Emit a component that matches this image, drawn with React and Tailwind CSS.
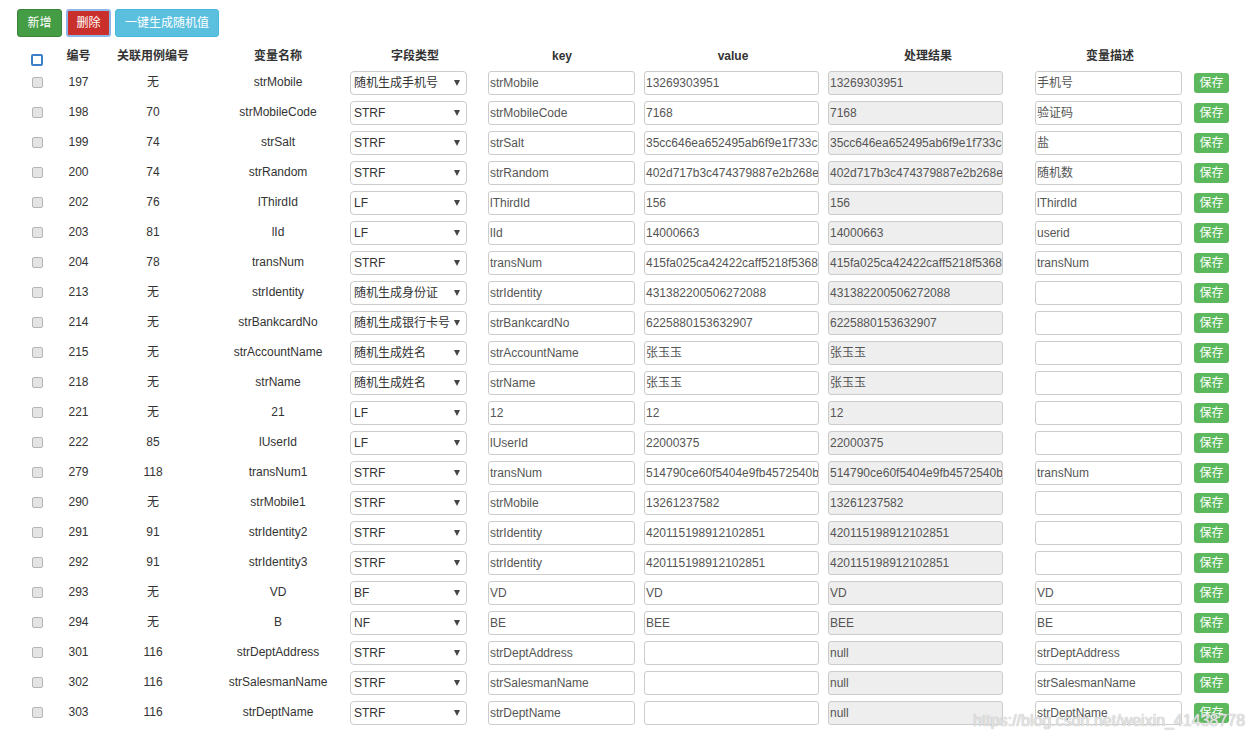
import React from "react";

const rows = [
  ["197", "无", "strMobile", "随机生成手机号", "strMobile", "13269303951", "13269303951", "手机号"],
  ["198", "70", "strMobileCode", "STRF", "strMobileCode", "7168", "7168", "验证码"],
  ["199", "74", "strSalt", "STRF", "strSalt", "35cc646ea652495ab6f9e1f733c8a1d2", "35cc646ea652495ab6f9e1f733c8a1d2", "盐"],
  ["200", "74", "strRandom", "STRF", "strRandom", "402d717b3c474379887e2b268e3f91ac", "402d717b3c474379887e2b268e3f91ac", "随机数"],
  ["202", "76", "lThirdId", "LF", "lThirdId", "156", "156", "lThirdId"],
  ["203", "81", "lId", "LF", "lId", "14000663", "14000663", "userid"],
  ["204", "78", "transNum", "STRF", "transNum", "415fa025ca42422caff5218f536895e1", "415fa025ca42422caff5218f536895e1", "transNum"],
  ["213", "无", "strIdentity", "随机生成身份证", "strIdentity", "431382200506272088", "431382200506272088", ""],
  ["214", "无", "strBankcardNo", "随机生成银行卡号", "strBankcardNo", "6225880153632907", "6225880153632907", ""],
  ["215", "无", "strAccountName", "随机生成姓名", "strAccountName", "张玉玉", "张玉玉", ""],
  ["218", "无", "strName", "随机生成姓名", "strName", "张玉玉", "张玉玉", ""],
  ["221", "无", "21", "LF", "12", "12", "12", ""],
  ["222", "85", "lUserId", "LF", "lUserId", "22000375", "22000375", ""],
  ["279", "118", "transNum1", "STRF", "transNum", "514790ce60f5404e9fb4572540b2c7d3", "514790ce60f5404e9fb4572540b2c7d3", "transNum"],
  ["290", "无", "strMobile1", "STRF", "strMobile", "13261237582", "13261237582", ""],
  ["291", "91", "strIdentity2", "STRF", "strIdentity", "420115198912102851", "420115198912102851", ""],
  ["292", "91", "strIdentity3", "STRF", "strIdentity", "420115198912102851", "420115198912102851", ""],
  ["293", "无", "VD", "BF", "VD", "VD", "VD", "VD"],
  ["294", "无", "B", "NF", "BE", "BEE", "BEE", "BE"],
  ["301", "116", "strDeptAddress", "STRF", "strDeptAddress", "", "null", "strDeptAddress"],
  ["302", "116", "strSalesmanName", "STRF", "strSalesmanName", "", "null", "strSalesmanName"],
  ["303", "116", "strDeptName", "STRF", "strDeptName", "", "null", "strDeptName"],
];

const font = {
  fontFamily: '"Liberation Sans", Arial, "Noto Sans CJK SC", sans-serif',
};

function Field({ value, width, gray }) {
  return (
    <div
      className={`h-[24px] ${width} overflow-hidden whitespace-nowrap rounded-[3px] border border-[#ccc] pl-[1px] leading-[22px] text-[#555] ${
        gray ? "bg-[#eee]" : "bg-white"
      }`}
    >
      {value}
    </div>
  );
}

function Select({ value }) {
  return (
    <div className="flex h-[24px] w-[117px] items-center justify-between rounded-[4px] border border-[#ccc] bg-white pl-[3px] pr-[6px] text-[#333]">
      <span className="whitespace-nowrap">{value}</span>
      <span className="h-0 w-0 border-x-[3.5px] border-t-[6px] border-x-transparent border-t-[#444]"></span>
    </div>
  );
}

export default function App() {
  return (
    <div className="relative min-h-[738px] bg-white text-[12px] text-[#333]" style={font}>
      <div className="flex gap-[4px] pl-[17px] pt-[9px]">
        <button className="h-[28px] w-[45px] rounded-[3px] border border-[#398439] bg-[#449d44] text-white">
          新增
        </button>
        <button className="h-[28px] w-[45px] rounded-[3px] border-2 border-[#8fb6e8] bg-[#c9302c] text-white">
          删除
        </button>
        <button className="h-[28px] w-[104px] rounded-[3px] border border-[#46b8da] bg-[#5bc0de] text-white">
          一键生成随机值
        </button>
      </div>

      <div className="flex h-[31px] pl-[17px] font-bold">
        <div className="flex w-[40px] justify-center pt-[17px]">
          <span className="h-[12px] w-[12px] rounded-[2px] border-2 border-[#3a7fc8]"></span>
        </div>
        <div className="w-[43px] pt-[10px] text-center">编号</div>
        <div className="w-[106px] pt-[10px] text-center">关联用例编号</div>
        <div className="w-[144px] pt-[10px] text-center">变量名称</div>
        <div className="w-[130px] pt-[10px] text-center">字段类型</div>
        <div className="w-[164px] pt-[10px] text-center">key</div>
        <div className="w-[178px] pt-[10px] text-center">value</div>
        <div className="w-[212px] pt-[10px] text-center">处理结果</div>
        <div className="w-[152px] pt-[10px] text-center">变量描述</div>
      </div>

      {rows.map((r) => (
        <div key={r[0]} className="flex h-[30px] items-center pl-[17px]">
          <div className="flex w-[40px] -translate-y-[1px] justify-center">
            <span className="h-[11px] w-[11px] rounded-[2px] border border-[#b5b5b5] bg-[#e4e4e4]"></span>
          </div>
          <div className="w-[43px] -translate-y-[1px] text-center">{r[0]}</div>
          <div className="w-[106px] -translate-y-[1px] text-center">{r[1]}</div>
          <div className="w-[144px] -translate-y-[1px] text-center">{r[2]}</div>
          <div className="w-[130px]">
            <Select value={r[3]} />
          </div>
          <div className="w-[164px] pl-[8px]">
            <Field value={r[4]} width="w-[147px]" />
          </div>
          <div className="w-[178px]">
            <Field value={r[5]} width="w-[175px]" />
          </div>
          <div className="w-[212px] pl-[6px]">
            <Field value={r[6]} width="w-[175px]" gray />
          </div>
          <div className="w-[152px] pl-[1px]">
            <Field value={r[7]} width="w-[147px]" />
          </div>
          <div className="pl-[8px]">
            <button className="h-[20px] w-[35px] rounded-[3px] bg-[#5cb85c] text-[12px] leading-[20px] text-white">
              保存
            </button>
          </div>
        </div>
      ))}

      <div className="pointer-events-none absolute left-[973px] top-[709px] whitespace-nowrap text-[16px] text-white/60 [text-shadow:0_0_1px_#bbb,0_0_1px_#bbb]">
        https://blog.csdn.net/weixin_41438778
      </div>
    </div>
  );
}
